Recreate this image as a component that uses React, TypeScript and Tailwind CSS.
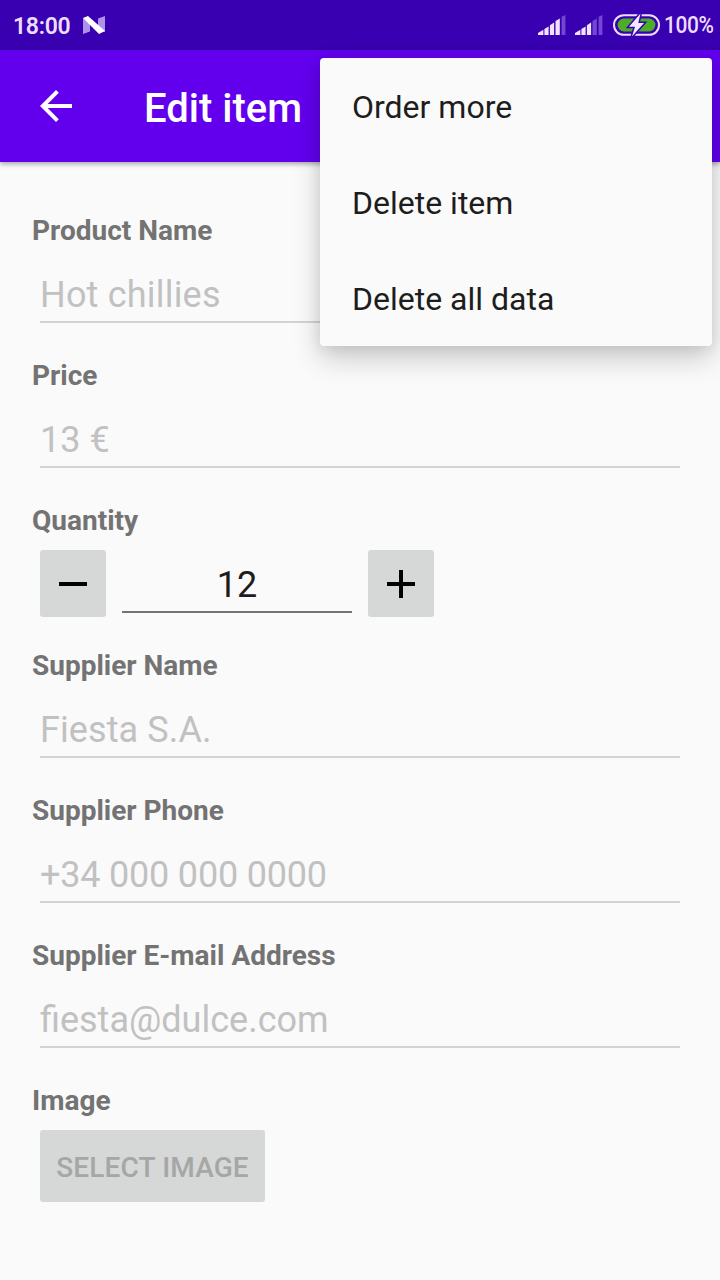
import React from "react";

function Signal({ level, className }: { level: number; className?: string }) {
  const bars = [
    "M0 20 V18 L5.4 14.8 V20Z",
    "M6.4 20 V14 L10.6 11.4 V20Z",
    "M11.9 20 V10.2 L16.1 7.6 V20Z",
    "M17.5 20 V6 L21.8 3.4 V20Z",
    "M23.6 20 V1.8 L27.4 0 V20Z",
  ];
  return (
    <svg className={className} width="28" height="20" viewBox="0 0 28 20">
      {bars.map((d, i) => (
        <path key={d} d={d} fill={i < level ? "#f2e2ff" : "#7447d2"} />
      ))}
    </svg>
  );
}

function StatusBar() {
  return (
    <div className="flex h-[50px] items-center bg-[#3800b0] pl-[13px] text-[#eedcff]">
      <span className="w-[57px] pt-[3px] text-[23px] leading-[47px] font-semibold tracking-[-0.3px] whitespace-nowrap">18:00</span>
      <svg className="ml-[13px]" width="22" height="18" viewBox="0 0 22 18">
        <path d="M0 2 L7 4 V15.5 L0 18Z M15 2.5 L22 0 V16 L15 14Z" fill="#ae92e9" />
        <path d="M0 2 L5 0 L22 15 L16 18Z" fill="#ffffff" />
      </svg>
      <Signal level={4} className="ml-[433px]" />
      <Signal level={3} className="ml-[9px]" />
      <svg className="ml-[10px]" width="47" height="22" viewBox="0 0 47 22">
        <rect x="1" y="1.2" width="45" height="19.6" rx="9.8" fill="#3800b0" stroke="#eedcff" strokeWidth="2" />
        <rect x="4.6" y="4.6" width="37.8" height="12.8" rx="6.4" fill="#4cae28" />
        <path d="M27.5 -0.5 L16 12.8 H22 L19 22.5 L31 9 H25.3Z" fill="#3800b0" stroke="#3800b0" strokeWidth="3" />
        <path d="M27.5 -0.5 L16 12.8 H22 L19 22.5 L31 9 H25.3Z" fill="#f4e8ff" />
      </svg>
      <span className="ml-[4px] w-[52px] shrink-0 origin-left scale-x-[0.91] pt-px text-[23px] leading-[49px] font-medium tracking-[-0.4px] whitespace-nowrap">100%</span>
    </div>
  );
}

function AppBar() {
  return (
    <header className="relative flex h-28 items-center bg-[#6200ee] shadow-[0_2px_5px_rgba(0,0,0,0.35)]">
      <svg className="ml-8" width="48" height="48" viewBox="0 0 24 24" fill="#fff">
        <path d="M20 11H7.83l5.59-5.59L12 4l-8 8 8 8 1.41-1.41L7.83 13H20v-2z" />
      </svg>
      <h1 className="ml-16 pt-1.5 text-[40px] leading-[48px] font-medium text-white">Edit item</h1>
    </header>
  );
}

function Label({ children }: { children: React.ReactNode }) {
  return <div className="h-[38px] text-[28px] leading-[38px] font-bold text-[#737373]">{children}</div>;
}

function Field({ label, hint, tracking = "" }: { label: string; hint: string; tracking?: string }) {
  return (
    <div className="h-[145px]">
      <Label>{label}</Label>
      <div className={`mx-2 h-[73px] border-b-2 border-[#d3d3d3] pt-[21px] text-[36px] leading-[48px] text-[#c1c1c1] ${tracking}`}>
        {hint}
      </div>
    </div>
  );
}

function Quantity() {
  return (
    <div className="h-[145px]">
      <Label>Quantity</Label>
      <div className="flex pt-2.5 pl-2">
        <button className="flex h-[67px] w-[66px] items-center justify-center rounded-[3px] bg-[#d6d7d7]">
          <svg width="48" height="48" viewBox="0 0 24 24">
            <path d="M19 13H5v-2h14v2z" />
          </svg>
        </button>
        <div className="mx-4 h-[63px] w-[230px] border-b-2 border-[#747474] pt-[11px] text-center text-[36px] leading-[48px] text-[#1d1d1d]">
          12
        </div>
        <button className="flex h-[67px] w-[66px] items-center justify-center rounded-[3px] bg-[#d6d7d7]">
          <svg width="48" height="48" viewBox="0 0 24 24">
            <path d="M19 13h-6v6h-2v-6H5v-2h6V5h2v6h6v2z" />
          </svg>
        </button>
      </div>
    </div>
  );
}

function OverflowMenu() {
  return (
    <div className="absolute top-[58px] left-80 h-72 w-[392px] rounded-[4px] bg-[#fafafa] text-[32px] leading-[96px] text-[#1d1d1d] shadow-[0_12px_28px_rgba(0,0,0,0.2),0_2px_14px_rgba(0,0,0,0.08)]">
      {["Order more", "Delete item", "Delete all data"].map((item) => (
        <div key={item} className="h-24 pt-px pl-8">
          {item}
        </div>
      ))}
    </div>
  );
}

export default function App() {
  return (
    <div className="relative h-[1280px] w-[720px] overflow-hidden bg-[#fafafa] font-['Roboto',sans-serif]">
      <StatusBar />
      <AppBar />
      <main className="px-8 pt-[50px]">
        <Field label="Product Name" hint="Hot chillies" tracking="tracking-[0.2px]" />
        <Field label="Price" hint="13 €" />
        <Quantity />
        <Field label="Supplier Name" hint="Fiesta S.A." tracking="tracking-[0.1px]" />
        <Field label="Supplier Phone" hint="+34 000 000 0000" tracking="tracking-[-0.2px]" />
        <Field label="Supplier E-mail Address" hint="fiesta@dulce.com" tracking="[word-spacing:0]" />
        <Label>Image</Label>
        <button className="mt-2.5 ml-2 h-[72px] w-[225px] rounded-[3px] bg-[#d6d7d7] pt-[3px] text-[28px] font-medium tracking-[0.15px] whitespace-nowrap text-[#a5a6a6]">
          SELECT IMAGE
        </button>
      </main>
      <OverflowMenu />
    </div>
  );
}
